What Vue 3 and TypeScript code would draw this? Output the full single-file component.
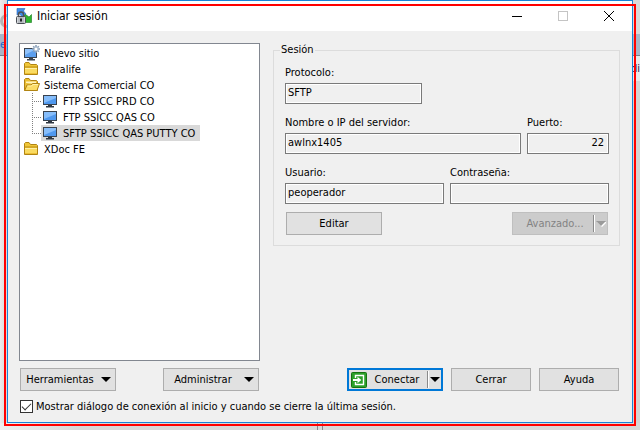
<script setup lang="ts">
import { ref } from 'vue'

interface Site {
  name: string
  icon: 'new' | 'folder' | 'open'
  children?: string[]
}

const sites: Site[] = [
  { name: 'Nuevo sitio', icon: 'new' },
  { name: 'Paralife', icon: 'folder' },
  {
    name: 'Sistema Comercial CO',
    icon: 'open',
    children: ['FTP SSICC PRD CO', 'FTP SSICC QAS CO', 'SFTP SSICC QAS PUTTY CO'],
  },
  { name: 'XDoc FE', icon: 'folder' },
]

const selected = ref('SFTP SSICC QAS PUTTY CO')
const protocol = ref('SFTP')
const host = ref('awlnx1405')
const port = ref('22')
const user = ref('peoperador')
const password = ref('')
const showOnStart = ref(true)
</script>

<template>
  <div class="desktop">
    <div class="side side-left" aria-hidden="true">
      <div class="strip-top"><span class="ring"></span></div>
      <div class="strip-bar">e</div>
      <div class="strip-rest"></div>
    </div>
    <main class="window">
      <header class="titlebar">
        <svg class="icon" viewBox="0 0 16 16" aria-hidden="true">
          <path d="M1 .5h8L7.500 3 10 6 6.500 9 3 5.500 1 7z" fill="#3f8ce8" stroke="#2362b5" stroke-width=".6" />
          <path d="M15.500 6.500v8H7.500L10 12 7 9l2.500-2.500L13 9z" fill="#2fb52f" stroke="#187a1e" stroke-width=".6" />
          <path d="M2.500 9V6.500a2.500 2.500 0 0 1 5 0V9" fill="none" stroke="#4d5157" stroke-width="1.500" />
          <rect x=".5" y="8.500" width="9" height="7" rx="1" fill="#d3d6da" stroke="#4a4e55" />
          <path d="M2 10h6M2 12h6M2 14h6" stroke="#9da2a9" />
          <rect x="4" y="10.500" width="2" height="3" fill="#25282d" />
        </svg>
        <h1>Iniciar sesión</h1>
        <div class="controls">
          <button type="button" aria-label="Minimizar">
            <svg viewBox="0 0 10 10"><path d="M0 5.500h10" /></svg>
          </button>
          <button type="button" aria-label="Maximizar" disabled>
            <svg viewBox="0 0 10 10"><rect x=".5" y=".5" width="9" height="9" /></svg>
          </button>
          <button type="button" aria-label="Cerrar ventana">
            <svg viewBox="0 0 10 10"><path d="M0 0l10 10M10 0L0 10" /></svg>
          </button>
        </div>
      </header>

      <form class="body" @submit.prevent>
        <div class="content">
          <ul class="tree">
            <li v-for="site in sites" :key="site.name">
              <div class="node">
                <svg v-if="site.icon === 'new'" class="icon" viewBox="0 0 16 16" aria-hidden="true">
                  <rect x=".5" y="3.500" width="12" height="9" fill="#5c9fee" stroke="#39434f" />
                  <path d="M1 4h11L1 10z" fill="#91c3fb" />
                  <path d="M5 13h4v1.500H5zM3 14h8v1.500H3z" fill="#39434f" />
                  <path d="M12 0v8M8 4h8M9.200 1.200l5.600 5.600M14.800 1.200L9.200 6.800" stroke="#8ba0b8" stroke-width="1.600" />
                  <circle cx="12" cy="4" r="2" fill="#fff" stroke="#a6b9ce" />
                </svg>
                <svg v-else-if="site.icon === 'folder'" class="icon" viewBox="0 0 16 16" aria-hidden="true">
                  <path d="M.5 13.500v-11l1-1H5l1.500 2h6l1 1v9z" fill="#f0c636" stroke="#b18413" />
                  <path d="M1 6h12" stroke="#b98b17" />
                  <path d="M1 7h12v6H1z" fill="#fadb61" />
                  <path d="M1 7.500h12" stroke="#fff0a5" />
                  <path d="M1 12.500h12" stroke="#edbf35" />
                </svg>
                <svg v-else class="icon" viewBox="0 0 16 16" aria-hidden="true">
                  <path d="M.5 13.500v-11l1-1H5l1.500 2h6l1 1v9z" fill="#eabe32" stroke="#b18413" />
                  <path d="M2 6V4.500h10V7" fill="#fff3bb" />
                  <path d="M.7 13.500L3 8h4l1.500-1.500h7L13 13.500z" fill="#fbdc65" stroke="#b18413" />
                  <path d="M3.500 9h4l1.500-1.500h5" fill="none" stroke="#fff2ac" />
                </svg>
                <span>{{ site.name }}</span>
              </div>
              <ul v-if="site.children" class="branch">
                <li v-for="child in site.children" :key="child">
                  <button
                    type="button"
                    class="leaf"
                    :class="{ active: child === selected }"
                    @click="selected = child"
                  >
                    <svg class="icon" viewBox="0 0 16 16" aria-hidden="true">
                      <rect x=".5" y="2.500" width="13" height="9" fill="#4f98ee" stroke="#39434f" />
                      <path d="M1 3h12v2L1 10z" fill="#86bdfa" />
                      <path d="M5 12h4v1.500H5zM3 13h8v1.500H3z" fill="#2f3741" />
                    </svg>
                    <span>{{ child }}</span>
                  </button>
                </li>
              </ul>
            </li>
          </ul>

          <fieldset class="session">
            <legend>Sesión</legend>
            <div class="fields">
              <div class="field protocol">
                <label for="protocol">Protocolo:</label>
                <input id="protocol" v-model="protocol" type="text" readonly />
              </div>
              <div class="pair host-pair">
                <div class="field">
                  <label for="host">Nombre o IP del servidor:</label>
                  <input id="host" v-model="host" type="text" readonly />
                </div>
                <div class="field">
                  <label for="port">Puerto:</label>
                  <input id="port" v-model="port" class="number" type="text" readonly />
                </div>
              </div>
              <div class="pair">
                <div class="field">
                  <label for="user">Usuario:</label>
                  <input id="user" v-model="user" type="text" readonly />
                </div>
                <div class="field">
                  <label for="password">Contraseña:</label>
                  <input id="password" v-model="password" type="password" readonly />
                </div>
              </div>
            </div>
            <div class="session-actions">
              <button type="button" class="btn">Editar</button>
              <button type="button" class="btn split" disabled>
                <span class="caption">Avanzado...</span>
                <span class="divider"></span>
                <svg class="arrow" viewBox="0 0 10 6" aria-hidden="true">
                  <path d="M1 1h10L6 6z" fill="#fff" />
                  <path d="M0 0h10L5 5z" />
                </svg>
              </button>
            </div>
          </fieldset>
        </div>

        <div class="actions">
          <div class="group tools">
            <button type="button" class="btn menu">
              <span class="caption">Herramientas</span>
              <svg class="arrow" viewBox="0 0 10 6" aria-hidden="true"><path d="M0 0h10L5 5z" /></svg>
            </button>
            <button type="button" class="btn menu">
              <span class="caption">Administrar</span>
              <svg class="arrow" viewBox="0 0 10 6" aria-hidden="true"><path d="M0 0h10L5 5z" /></svg>
            </button>
          </div>
          <div class="group">
            <button type="submit" class="btn split primary">
              <svg class="icon" viewBox="0 0 16 16" aria-hidden="true">
                <rect x=".5" y=".5" width="15" height="15" rx="1" fill="#2ca02a" stroke="#14720f" />
                <path d="M4.500 6V3.500h8v9h-8V10" fill="none" stroke="#fff" stroke-width="1.400" />
                <path d="M2 7h4.500V4.800L10.300 8l-3.800 3.200V9H2z" fill="#fff" />
              </svg>
              <span class="caption">Conectar</span>
              <span class="divider"></span>
              <svg class="arrow" viewBox="0 0 10 6" aria-hidden="true"><path d="M0 0h10L5 5z" /></svg>
            </button>
            <button type="button" class="btn small">Cerrar</button>
            <button type="button" class="btn small">Ayuda</button>
          </div>
        </div>

        <label class="startup">
          <input v-model="showOnStart" type="checkbox" />
          <span>Mostrar diálogo de conexión al inicio y cuando se cierre la última sesión.</span>
        </label>
      </form>
    </main>
    <div class="side side-right" aria-hidden="true">
      <div class="strip-top"></div>
      <div class="strip-bar"></div>
      <div class="strip-mid">di</div>
      <div class="strip-rest"></div>
    </div>
    <div class="below" aria-hidden="true"><span></span><span></span></div>
    <div class="frame" aria-hidden="true"></div>
  </div>
</template>

<style>
body {
  margin: 0;
}
</style>

<style scoped>
* {
  box-sizing: border-box;
}

.desktop {
  position: relative;
  display: grid;
  grid-template-columns: 7px minmax(0, 1fr) 7px;
  grid-template-rows: 1fr 7px;
  min-height: 100vh;
  background: #e4e4e4;
  color: #000;
  font-family: Tahoma, "DejaVu Sans Condensed", "DejaVu Sans", sans-serif;
  font-size: 11px;
  line-height: 14px;
}

.icon {
  flex: none;
  width: 16px;
  height: 16px;
}

.frame {
  position: absolute;
  z-index: 2;
  inset: 4px;
  border: 2px solid #f00;
  pointer-events: none;
}

.side {
  display: flex;
  flex-direction: column;
  background: #d9d9d9;
}

.side-left {
  background: linear-gradient(90deg, #ededed, #d8d8d8);
}

.strip-top {
  display: flex;
  align-items: center;
  height: 34px;
  padding-top: 8px;
}

.ring {
  flex: none;
  width: 14px;
  height: 14px;
  border: 3px solid #b4b4b4;
  border-radius: 50%;
}

.strip-bar {
  height: 22px;
  border-bottom: 1px solid #777e88;
  background: #a9b5c6;
  color: #1c63c8;
  line-height: 22px;
}

.strip-mid {
  display: flex;
  justify-content: flex-end;
  height: 25px;
  background: #e8e8e8;
  color: #301040;
  line-height: 25px;
}

.strip-rest {
  flex: 1;
}

.side-right .strip-rest {
  background: #d4d4d4;
}

.below {
  display: flex;
  grid-column: 1 / -1;
  justify-content: center;
  gap: 4px;
  background: linear-gradient(90deg, #efefef, #d8d8d8 12%, #d8d8d8);
}

.below span {
  width: 1px;
  background: #85858c;
}

.window {
  position: relative;
  z-index: 1;
  display: flex;
  flex-direction: column;
  border: 1px solid #1883d7;
  background: #f0f0f0;
}

.titlebar {
  display: flex;
  align-items: center;
  height: 30px;
  padding-left: 8px;
  background: #fff;
}

h1 {
  flex: 1;
  margin: 0;
  padding-left: 5px;
  font-size: 12px;
  font-weight: 400;
}

.controls {
  display: flex;
}

.controls button {
  display: flex;
  align-items: center;
  justify-content: center;
  width: 46px;
  height: 30px;
  padding: 0;
  border: 0;
  background: none;
}

.controls svg {
  width: 10px;
  height: 10px;
  fill: none;
  stroke: #000;
}

.controls button:disabled svg {
  stroke: #c4c4c4;
}

.body {
  display: flex;
  flex: 1;
  flex-direction: column;
  padding: 12px 12px 9px 11px;
}

.content {
  display: grid;
  flex: 1;
  grid-template-columns: 241fr 347fr;
  gap: 13px;
}

ul {
  margin: 0;
  padding: 0;
  list-style: none;
}

.tree {
  padding: 1px 4px;
  border: 1px solid #828790;
  background: #fff;
}

.node,
.leaf {
  display: flex;
  align-items: center;
  gap: 4px;
  height: 16px;
  white-space: nowrap;
}

.node span,
.leaf span {
  padding-top: 2px;
}

.branch {
  padding-left: 8px;
}

.branch li {
  display: flex;
  align-items: center;
  background:
    repeating-linear-gradient(90deg, #808080 0 1px, transparent 1px 2px) 0 8px / 9px 1px no-repeat,
    repeating-linear-gradient(#808080 0 1px, transparent 1px 2px) 0 0 / 1px 16px no-repeat;
}

.branch li:last-child {
  background-size: 9px 1px, 1px 8px;
}

.leaf {
  margin-left: 9px;
  padding: 0 5px 0 2px;
  border: 0;
  background: none;
  color: inherit;
  font: inherit;
}

.leaf.active {
  background: #d9d9d9;
}

.session {
  align-self: start;
  min-width: 0;
  margin: 0;
  padding: 9px 10px 10px 11px;
  border: 1px solid #dcdcdc;
}

legend {
  margin-left: -5px;
  padding: 0 1px;
}

.fields {
  display: grid;
  gap: 12px;
}

.field {
  display: grid;
  gap: 3px;
  min-width: 0;
}

.protocol {
  width: 137px;
}

.pair {
  display: grid;
  grid-template-columns: 1fr 1fr;
  gap: 6px;
}

.host-pair {
  grid-template-columns: 1fr 82px;
}

.field input {
  width: 100%;
  height: 21px;
  padding: 0 2px 2px;
  border: 1px solid #7a7a7a;
  border-radius: 0;
  background: #f0f0f0;
  box-shadow: inset 0 0 0 1px #fff;
  color: inherit;
  font: inherit;
  outline: 0;
}

.field input.number {
  padding-right: 4px;
  text-align: right;
}

.session-actions {
  display: flex;
  justify-content: space-between;
  padding: 8px 1px 0;
}

.btn {
  display: flex;
  align-items: center;
  justify-content: center;
  width: 96px;
  height: 23px;
  padding: 0 6px;
  border: 1px solid #adadad;
  background: #e1e1e1;
  color: inherit;
  font: inherit;
  white-space: nowrap;
}

.btn.small {
  width: 80px;
}

.btn.menu {
  padding: 0 4px;
}

.btn.menu .caption {
  padding-right: 6px;
}

.btn.split {
  padding: 0 1px 0 4px;
}

.btn.primary {
  padding: 0 1px 0 2px;
  border: 2px solid #0078d7;
}

.btn:disabled {
  border-color: #bfbfbf;
  background: #ccc;
  color: #838383;
}

.btn:disabled .arrow {
  fill: #9a9a9a;
}

.caption {
  flex: 1;
}

.arrow {
  flex: none;
  width: 10px;
  height: 6px;
}

.divider {
  flex: none;
  width: 2px;
  height: 17px;
  margin-right: 1px;
  border-left: 1px solid #8a8a8a;
  background: #fff;
}

.actions {
  display: flex;
  justify-content: space-between;
  padding: 7px 1px 9px;
}

.group {
  display: flex;
  gap: 8px;
}

.tools {
  gap: 47px;
}

.startup {
  display: flex;
  align-items: center;
  align-self: start;
  gap: 3px;
  height: 13px;
  margin-left: 1px;
}

.startup input {
  display: grid;
  place-items: center;
  width: 13px;
  height: 13px;
  margin: 0;
  border: 1px solid #333;
  background: #fff;
  appearance: none;
}

.startup input:checked::before {
  width: 8px;
  height: 4px;
  margin-top: -3px;
  border: solid #333;
  border-width: 0 0 1px 1px;
  transform: rotate(-45deg);
  content: "";
}
</style>
